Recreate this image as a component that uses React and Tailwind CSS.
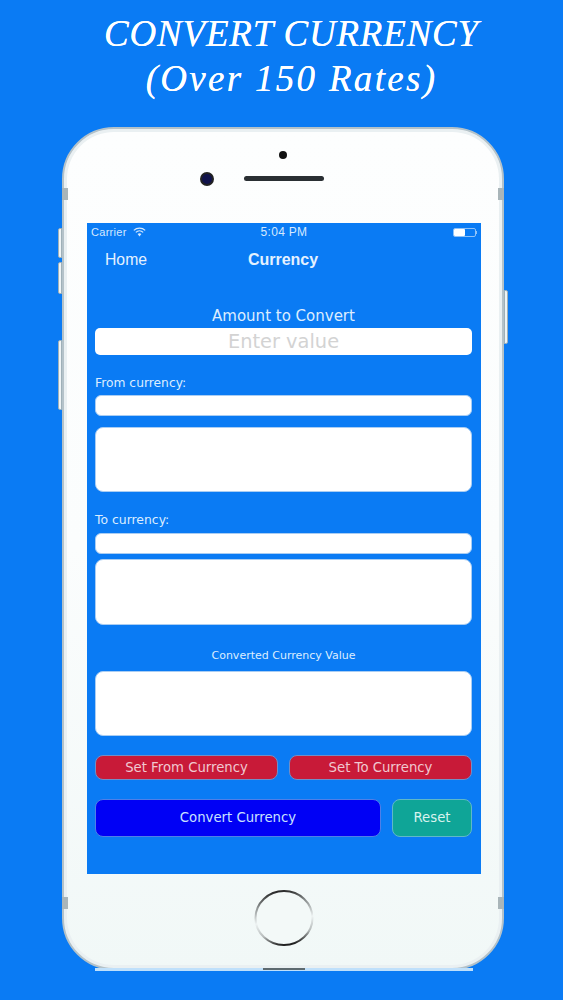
import React from 'react';

const sans = "font-['Liberation_Sans',Arial,sans-serif]";
const dejavu = "font-['DejaVu_Sans',Verdana,sans-serif]";

const WifiIcon = () => (
  <svg width="13" height="10" viewBox="0 0 13 10" className="ml-[6px]">
    <path d="M0.8 3.4 A8.2 8.2 0 0 1 12.2 3.4" fill="none" stroke="#d5e9ff" strokeWidth="1.2" />
    <path d="M2.8 5.4 A5.4 5.4 0 0 1 10.2 5.4" fill="none" stroke="#d5e9ff" strokeWidth="1.2" />
    <path d="M4.6 7.1 A3 3 0 0 1 8.4 7.1 L6.5 9.4 Z" fill="#d5e9ff" />
  </svg>
);

const Battery = () => (
  <div className="flex items-center">
    <div className="w-[23px] h-[9px] border border-[#8fc2f8] rounded-[2px]">
      <div className="w-[11px] h-full bg-white rounded-[1px]" />
    </div>
    <div className="w-[1px] h-[3px] bg-[#8fc2f8]" />
  </div>
);

const HomeRing = () => (
  <svg width="60" height="58" viewBox="0 0 60 58">
    <defs>
      <linearGradient id="ring" x1="0.35" y1="0" x2="0.5" y2="1">
        <stop offset="0" stopColor="#222" />
        <stop offset="0.25" stopColor="#8b9090" />
        <stop offset="0.55" stopColor="#eef3f3" />
        <stop offset="0.8" stopColor="#b5baba" />
        <stop offset="1" stopColor="#1e1e1e" />
      </linearGradient>
    </defs>
    <ellipse cx="30" cy="29" rx="28.5" ry="27" fill="#f3f9f8" stroke="url(#ring)" strokeWidth="2" />
  </svg>
);

const Box = ({ className }) => (
  <div className={`bg-white border border-[#a9cdf3] ${className}`} />
);

const SideKey = ({ className }) => (
  <div className={`absolute w-[4px] bg-[#eef4f6] border border-[#9fb0b8] ${className}`} />
);

export default function App() {
  return (
    <div className="w-[563px] h-[1000px] bg-[#0a7bf4] overflow-hidden flex flex-col items-center">
      {/* Heading */}
      <div className="ml-[20px] h-[127px] pt-[11px] font-['Liberation_Serif',serif] italic text-white text-center text-[37px] leading-[45px] tracking-[0.8px] [text-shadow:0_0_0.6px_#fff]">
        <div>CONVERT CURRENCY</div>
        <div className="tracking-[2.3px]">(Over 150 Rates)</div>
      </div>

      {/* Phone */}
      <div className="relative ml-[3px] pl-[2px] w-[442px] h-[843px] bg-linear-to-b from-[#fdfefe] via-[#fbfdfd] to-[#f1f8f7] rounded-[52px] border-[2px] border-[#b4c2c9] shadow-[inset_0_0_0_3px_#eaf0f2] flex flex-col items-center">
        {/* Side buttons */}
        <SideKey className="left-[-6px] top-[99px] h-[30px] rounded-l-[2px]" />
        <SideKey className="left-[-6px] top-[133px] h-[32px] rounded-l-[2px]" />
        <SideKey className="left-[-6px] top-[211px] h-[70px] rounded-l-[2px]" />
        <SideKey className="right-[-6px] top-[161px] h-[54px] rounded-r-[2px]" />

        {/* Antenna bands */}
        <div className="absolute left-[-2px] top-[59px] w-[6px] h-[12px] bg-[#a9b5b9]" />
        <div className="absolute right-[-2px] top-[59px] w-[6px] h-[12px] bg-[#a9b5b9]" />
        <div className="absolute left-[-2px] top-[768px] w-[6px] h-[12px] bg-[#a9b5b9]" />
        <div className="absolute right-[-2px] top-[768px] w-[6px] h-[12px] bg-[#a9b5b9]" />

        {/* Bottom edge */}
        <div className="absolute left-[31px] bottom-[-3px] w-[378px] h-[3px] bg-[#bfe0fb] flex justify-center">
          <div className="w-[42px] h-[2px] bg-[#5d6a70]" />
        </div>

        {/* Speaker and camera */}
        <div className="relative h-[94px] w-full shrink-0">
          <div className="absolute left-[213px] top-[22px] w-[8px] h-[8px] rounded-full bg-[#111]" />
          <div className="absolute left-[134px] top-[43px] w-[14px] h-[14px] rounded-full bg-[#10124a] border-[2px] border-[#222]" />
          <div className="absolute left-[178px] top-[47px] w-[80px] h-[5px] rounded-full bg-[#2a2f33]" />
        </div>

        {/* Screen */}
        <div className="w-[394px] h-[651px] bg-[#0a7bf4] flex flex-col shrink-0">
          <div className={`${sans} h-[18px] relative flex items-center justify-between pl-[4px] pr-[4px] text-[11px] text-[#d5e9ff]`}>
            <div className="flex items-center tracking-[0.3px]">
              Carrier
              <WifiIcon />
            </div>
            <div className="absolute left-0 right-0 text-center text-[12px] tracking-[0.3px]">5:04 PM</div>
            <Battery />
          </div>

          <div className={`${sans} relative mt-[8px] h-[22px] pr-[2px] flex items-center justify-center text-[#e4f1ff]`}>
            <span className="absolute left-[18px] text-[15.75px]">Home</span>
            <span className="font-bold text-[16px]">Currency</span>
          </div>

          <div className={`${dejavu} flex flex-col pl-[8px] pr-[9px] text-[#dcedff]`}>
            <div className="mt-[35px] h-[20px] leading-[20px] text-center text-[15px]">Amount to Convert</div>
            <div className="mt-[2px] h-[27px] bg-white rounded-[5px] flex items-center justify-center text-[19.4px] text-[#d3d3d3]">
              Enter value
            </div>

            <div className="mt-[21px] h-[14px] leading-[14px] text-[12.3px]">From currency:</div>
            <Box className="mt-[5px] h-[21px] rounded-[6px]" />
            <Box className="mt-[11px] h-[65px] rounded-[8px]" />

            <div className="mt-[21px] h-[14px] leading-[14px] text-[12.4px]">To currency:</div>
            <Box className="mt-[6px] h-[21px] rounded-[6px]" />
            <Box className="mt-[5px] h-[66px] rounded-[8px]" />

            <div className="mt-[24px] h-[14px] leading-[14px] text-center text-[11px]">Converted Currency Value</div>
            <Box className="mt-[8px] h-[65px] rounded-[8px]" />

            <div className="mt-[19px] flex gap-[11px] text-[13.25px] text-[#f0c8d0]">
              <button className="flex-1 h-[25px] rounded-[8px] bg-[#c81a38] border border-[#6f8fc8]">Set From Currency</button>
              <button className="flex-1 h-[25px] rounded-[8px] bg-[#c81a38] border border-[#6f8fc8]">Set To Currency</button>
            </div>

            <div className="mt-[19px] flex gap-[11px] text-[13.25px]">
              <button className="w-[286px] h-[38px] rounded-[8px] bg-[#0000f5] border border-[#4f7fe8] text-[#c9e0ff]">Convert Currency</button>
              <button className="flex-1 h-[38px] rounded-[8px] bg-[#0fa597] border border-[#5fb8c8] text-[#d8f3ee]">Reset</button>
            </div>
          </div>
        </div>

        {/* Home button */}
        <div className="mt-[15px]">
          <HomeRing />
        </div>
      </div>
    </div>
  );
}
